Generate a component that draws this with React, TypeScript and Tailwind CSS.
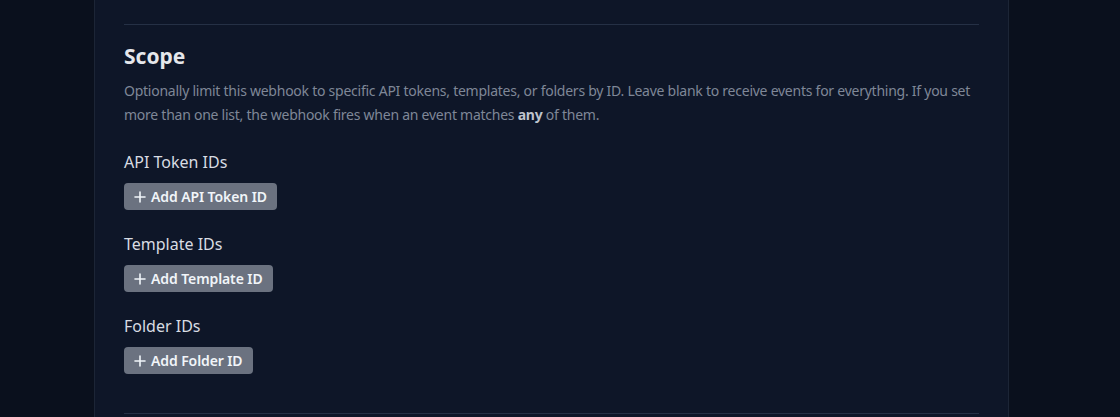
import React from "react";

function AddButton({ label }: { label: string }) {
  return (
    <button
      type="button"
      className="flex h-[27px] items-center gap-[5px] self-start rounded-[4px] bg-[#6b7280] pl-[10px] pr-[10px] text-[14px] font-semibold tracking-[-0.1px] text-[#f1f5f9]"
    >
      <svg width="12" height="12" viewBox="0 0 12 12" fill="none" stroke="currentColor" strokeWidth="1.6" strokeLinecap="round">
        <path d="M6 1v10M1 6h10" />
      </svg>
      <span>{label}</span>
    </button>
  );
}

function Group({ title, button }: { title: string; button: string }) {
  return (
    <div className="flex flex-col">
      <div className="text-[16px] leading-[24px] text-[#d8dce3]">{title}</div>
      <div className="mt-[9px] flex">
        <AddButton label={button} />
      </div>
    </div>
  );
}

export default function App() {
  return (
    <div
      className="h-[417px] w-[1120px] overflow-hidden bg-[#0a101d]"
      style={{ fontFamily: '"Noto Sans", "Open Sans", sans-serif' }}
    >
      <div className="ml-[94px] h-full w-[915px] border-x border-[#1c2536] bg-[#0e1628] px-[29px]">
        <div className="h-[25px] border-b border-[#253045]" />
        <h2 className="mt-[17px] text-[21px] font-bold leading-[28px] text-[#e5e7eb]">Scope</h2>
        <p className="mt-[9px] text-[14px] leading-[24px] tracking-[-0.25px] text-[#7f8797]">
          Optionally limit this webhook to specific API tokens, templates, or folders by ID. Leave blank to receive
          events for everything. If you set more than one list, the webhook fires when an event matches{" "}
          <b className="font-bold text-[#bfc4cd]">any</b> of them.
        </p>
        <div className="mt-[23px] flex flex-col gap-[22px]">
          <Group title="API Token IDs" button="Add API Token ID" />
          <Group title="Template IDs" button="Add Template ID" />
          <Group title="Folder IDs" button="Add Folder ID" />
        </div>
        <div className="mt-[39px] border-t border-[#253045]" />
      </div>
    </div>
  );
}
